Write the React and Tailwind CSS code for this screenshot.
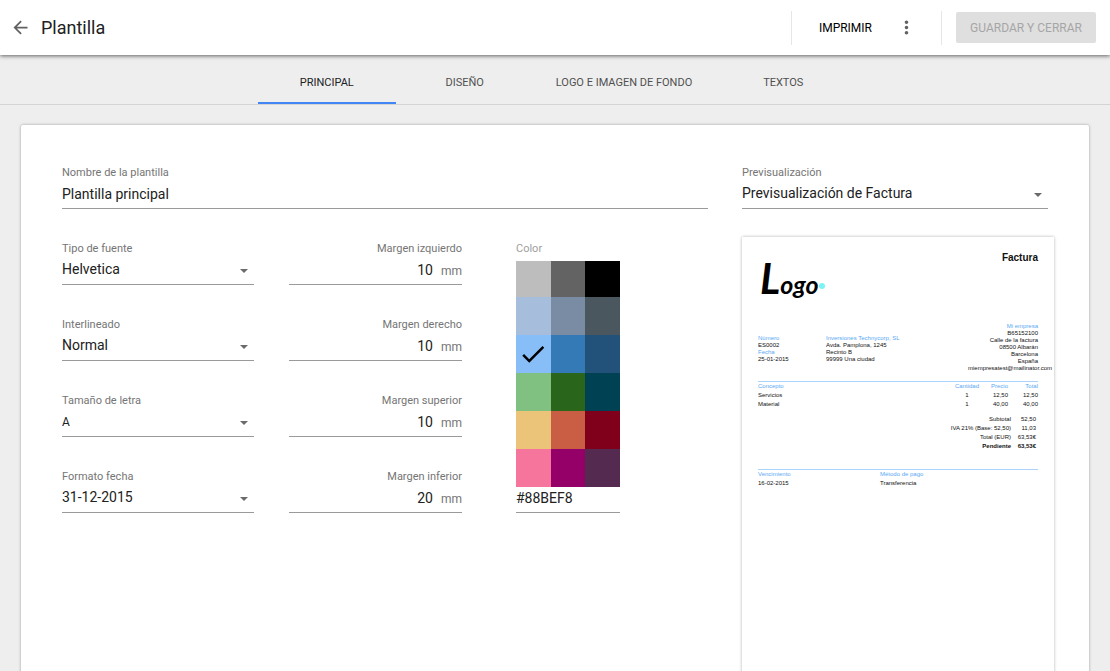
import { useState } from 'react';
import { MdArrowBack, MdMoreVert, MdCheck } from 'react-icons/md';

const TABS = [
  { id: 'main', label: 'Principal' },
  { id: 'design', label: 'Diseño' },
  { id: 'logo', label: 'Logo e imagen de fondo' },
  { id: 'texts', label: 'Textos' },
];

const SELECTS = [
  { id: 'font', label: 'Tipo de fuente', options: ['Helvetica', 'Times', 'Courier'] },
  { id: 'leading', label: 'Interlineado', options: ['Normal', 'Amplio'] },
  { id: 'size', label: 'Tamaño de letra', options: ['A', 'A+', 'A++'], small: true },
  { id: 'date', label: 'Formato fecha', options: ['31-12-2015', '12-31-2015', '2015-12-31'] },
];

const MARGINS = [
  { id: 'left', label: 'Margen izquierdo', value: '10' },
  { id: 'right', label: 'Margen derecho', value: '10' },
  { id: 'top', label: 'Margen superior', value: '10' },
  { id: 'bottom', label: 'Margen inferior', value: '20' },
];

const COLORS = [
  '#BDBDBD', '#636363', '#000000',
  '#A7BDDC', '#7A8BA4', '#4A575F',
  '#88BEF8', '#337AB7', '#22527A',
  '#80C080', '#29661B', '#004253',
  '#ECC479', '#C95E45', '#80001C',
  '#F5759D', '#940067', '#552A51',
];

const ITEMS = [
  { name: 'Servicios', qty: '1', price: '12,50', total: '12,50' },
  { name: 'Material', qty: '1', price: '40,00', total: '40,00' },
];

const TOTALS = [
  { label: 'Subtotal', value: '52,50' },
  { label: 'IVA 21% (Base: 52,50)', value: '11,03' },
  { label: 'Total (EUR)', value: '63,53€' },
  { label: 'Pendiente', value: '63,53€', strong: true },
];

function SelectField({ id, label, options, small }) {
  return (
    <div>
      <label htmlFor={id} className="block text-[11px] leading-4 text-[#757575]">{label}</label>
      <div className="relative">
        <select
          id={id}
          className={`block h-7 w-full appearance-none border-b border-[#9a9a9a] outline-none ${small ? 'pb-0.5 text-xs' : 'pb-1 text-sm'}`}
        >
          {options.map((o) => <option key={o}>{o}</option>)}
        </select>
        <span className="pointer-events-none absolute right-1.5 top-3 border-x-4 border-t-4 border-x-transparent border-t-[#6b6b6b]" />
      </div>
    </div>
  );
}

function MarginField({ id, label, value }) {
  return (
    <div>
      <label htmlFor={id} className="block text-right text-[11px] leading-4 text-[#757575]">{label}</label>
      <div className="flex h-7 items-baseline gap-2 border-b border-[#9a9a9a] pt-[3px] text-sm">
        <input id={id} defaultValue={value} className="min-w-0 flex-1 text-right outline-none" />
        <span className="text-xs text-[#757575]">mm</span>
      </div>
    </div>
  );
}

function ColorField({ color, onChange }) {
  return (
    <fieldset>
      <legend className="text-[11px] leading-4 text-[#9e9e9e]">Color</legend>
      <div className="mt-1 grid grid-cols-3 grid-rows-[36px_repeat(5,38px)]">
        {COLORS.map((c) => (
          <label key={c} className="flex cursor-pointer items-center justify-center text-black" style={{ backgroundColor: c }}>
            <input
              type="radio"
              name="color"
              value={c}
              aria-label={c}
              checked={c === color}
              onChange={() => onChange(c)}
              className="sr-only"
            />
            {c === color && <MdCheck size={30} />}
          </label>
        ))}
      </div>
      <input
        aria-label="Color hexadecimal"
        value={color}
        onChange={(e) => onChange(e.target.value)}
        className="block h-[26px] w-full border-b border-[#9a9a9a] pb-1 text-sm outline-none"
      />
    </fieldset>
  );
}

function CompanyLogo() {
  return (
    <svg width="68" height="70" viewBox="0 0 68 70" role="img" aria-label="Logo">
      <text x="2" y="41" fontFamily="Lato, sans-serif" fontStyle="italic" fontWeight="bold" fontSize="25">
        <tspan fontSize="42">L</tspan>ogo
      </text>
      <circle cx="64" cy="33" r="3" fill="#7df3f5" />
    </svg>
  );
}

function InvoicePreview({ accent }) {
  const accentText = { color: accent };
  const rule = { borderColor: `${accent}80` };

  return (
    <div className="-mr-1.5 aspect-[210/297] bg-white px-4 pt-4 font-['Liberation_Sans',sans-serif] text-[6px] leading-[7px] text-[#111] shadow-[0_0_3px_rgba(0,0,0,0.3)]">
      <div className="flex justify-between">
        <CompanyLogo />
        <h2 className="text-[10px] font-bold leading-[10px]">Factura</h2>
      </div>

      <div className="flex">
        <div className="w-[68px] pt-3">
          <p style={accentText}>Número</p>
          <p>ES0002</p>
          <p style={accentText}>Fecha</p>
          <p>25-01-2015</p>
        </div>
        <div className="pt-3">
          <p style={accentText}>Inversiones Technycorp, SL</p>
          <p>Avda. Pamplona, 1245</p>
          <p>Recinto B</p>
          <p>99999 Una ciudad</p>
        </div>
        <div className="ml-auto w-[70px] whitespace-nowrap text-right">
          <p style={accentText}>Mi empresa</p>
          <p>B65152100</p>
          <p>Calle de la factura</p>
          <p>08500 Albarán</p>
          <p>Barcelona</p>
          <p>España</p>
          <p>miempresatest@mailinator.com</p>
        </div>
      </div>

      {/* Line items */}
      <div className="mt-[9px] border-t" style={rule}>
        <table className="w-full table-fixed leading-[9px]">
          <thead>
            <tr style={accentText}>
              <th className="text-left font-normal">Concepto</th>
              <th className="w-[26px] text-center font-normal">Cantidad</th>
              <th className="w-7 text-right font-normal">Precio</th>
              <th className="w-[30px] text-right font-normal">Total</th>
            </tr>
          </thead>
          <tbody>
            {ITEMS.map((item) => (
              <tr key={item.name}>
                <td>{item.name}</td>
                <td className="text-center">{item.qty}</td>
                <td className="text-right">{item.price}</td>
                <td className="text-right">{item.total}</td>
              </tr>
            ))}
          </tbody>
        </table>
      </div>

      <table className="ml-auto mr-0.5 mt-1.5 text-right leading-[9px]">
        <tbody>
          {TOTALS.map((t) => (
            <tr key={t.label} className={t.strong ? 'font-bold' : ''}>
              <td>{t.label}</td>
              <td className="w-[25px]">{t.value}</td>
            </tr>
          ))}
        </tbody>
      </table>

      <div className="mt-[18px] grid grid-cols-[122px_1fr] border-t leading-[9px]" style={rule}>
        <div>
          <p style={accentText}>Vencimiento</p>
          <p>16-02-2015</p>
        </div>
        <div>
          <p style={accentText}>Método de pago</p>
          <p>Transferencia</p>
        </div>
      </div>
    </div>
  );
}

export default function App() {
  const [tab, setTab] = useState('main');
  const [color, setColor] = useState('#88BEF8');

  return (
    <div className="flex min-h-screen flex-col bg-[#eeeeee] font-['Roboto',sans-serif] text-[#212121]">
      {/* Top bar */}
      <header className="relative flex h-[55px] items-center bg-white pl-2.5 pr-3.5 shadow-[0_1px_4px_rgba(0,0,0,0.6)]">
        <button aria-label="Volver" className="text-[#616161]">
          <MdArrowBack size={21} />
        </button>
        <h1 className="ml-2.5 text-lg">Plantilla</h1>

        <div className="ml-auto flex h-[34px] items-center border-x border-[#e6e6e6] pl-[27px] pr-6">
          <button className="text-xs uppercase text-black">Imprimir</button>
          <button aria-label="Más opciones" className="ml-6 text-[#616161]">
            <MdMoreVert size={21} />
          </button>
        </div>
        <button disabled className="ml-3.5 h-[31px] w-[140px] rounded-xs bg-[#dfdfdf] text-xs uppercase text-[#a6a6a6]">
          Guardar y cerrar
        </button>
      </header>

      {/* Tabs */}
      <nav role="tablist" className="flex h-[50px] justify-center border-b border-[#d4d4d4]">
        {TABS.map((t) => (
          <button
            key={t.id}
            role="tab"
            aria-selected={tab === t.id}
            onClick={() => setTab(t.id)}
            className={`min-w-[138px] border-b-2 px-[22px] pt-2.5 text-[11px] uppercase ${
              tab === t.id ? 'border-[#4285f4] text-[#212121]' : 'border-transparent text-[#505050]'
            }`}
          >
            {t.label}
          </button>
        ))}
      </nav>

      <main className="mx-[21px] mt-5 flex flex-1 gap-[34px] rounded-xs bg-white px-[41px] pt-10 shadow-[0_0_3px_rgba(0,0,0,0.35)]">
        {/* Settings */}
        <form className="flex min-w-0 flex-1 flex-col gap-8">
          <div>
            <label htmlFor="name" className="block text-[11px] leading-4 text-[#757575]">Nombre de la plantilla</label>
            <input
              id="name"
              defaultValue="Plantilla principal"
              className="block h-7 w-full border-b border-[#9a9a9a] pb-0.5 text-sm outline-none"
            />
          </div>

          <div className="flex items-start">
            <div className="flex w-48 flex-col gap-8">
              {SELECTS.map((s) => <SelectField key={s.id} {...s} />)}
            </div>
            <div className="ml-[35px] flex w-[173px] flex-col gap-8">
              {MARGINS.map((m) => <MarginField key={m.id} {...m} />)}
            </div>
            <div className="ml-[54px] w-[104px]">
              <ColorField color={color} onChange={setColor} />
            </div>
          </div>
        </form>

        {/* Live preview */}
        <section className="flex w-[306px] flex-col gap-7">
          <SelectField
            id="preview"
            label="Previsualización"
            options={['Previsualización de Factura', 'Previsualización de Presupuesto']}
          />
          <InvoicePreview accent="#5aa9f5" />
        </section>
      </main>
    </div>
  );
}
